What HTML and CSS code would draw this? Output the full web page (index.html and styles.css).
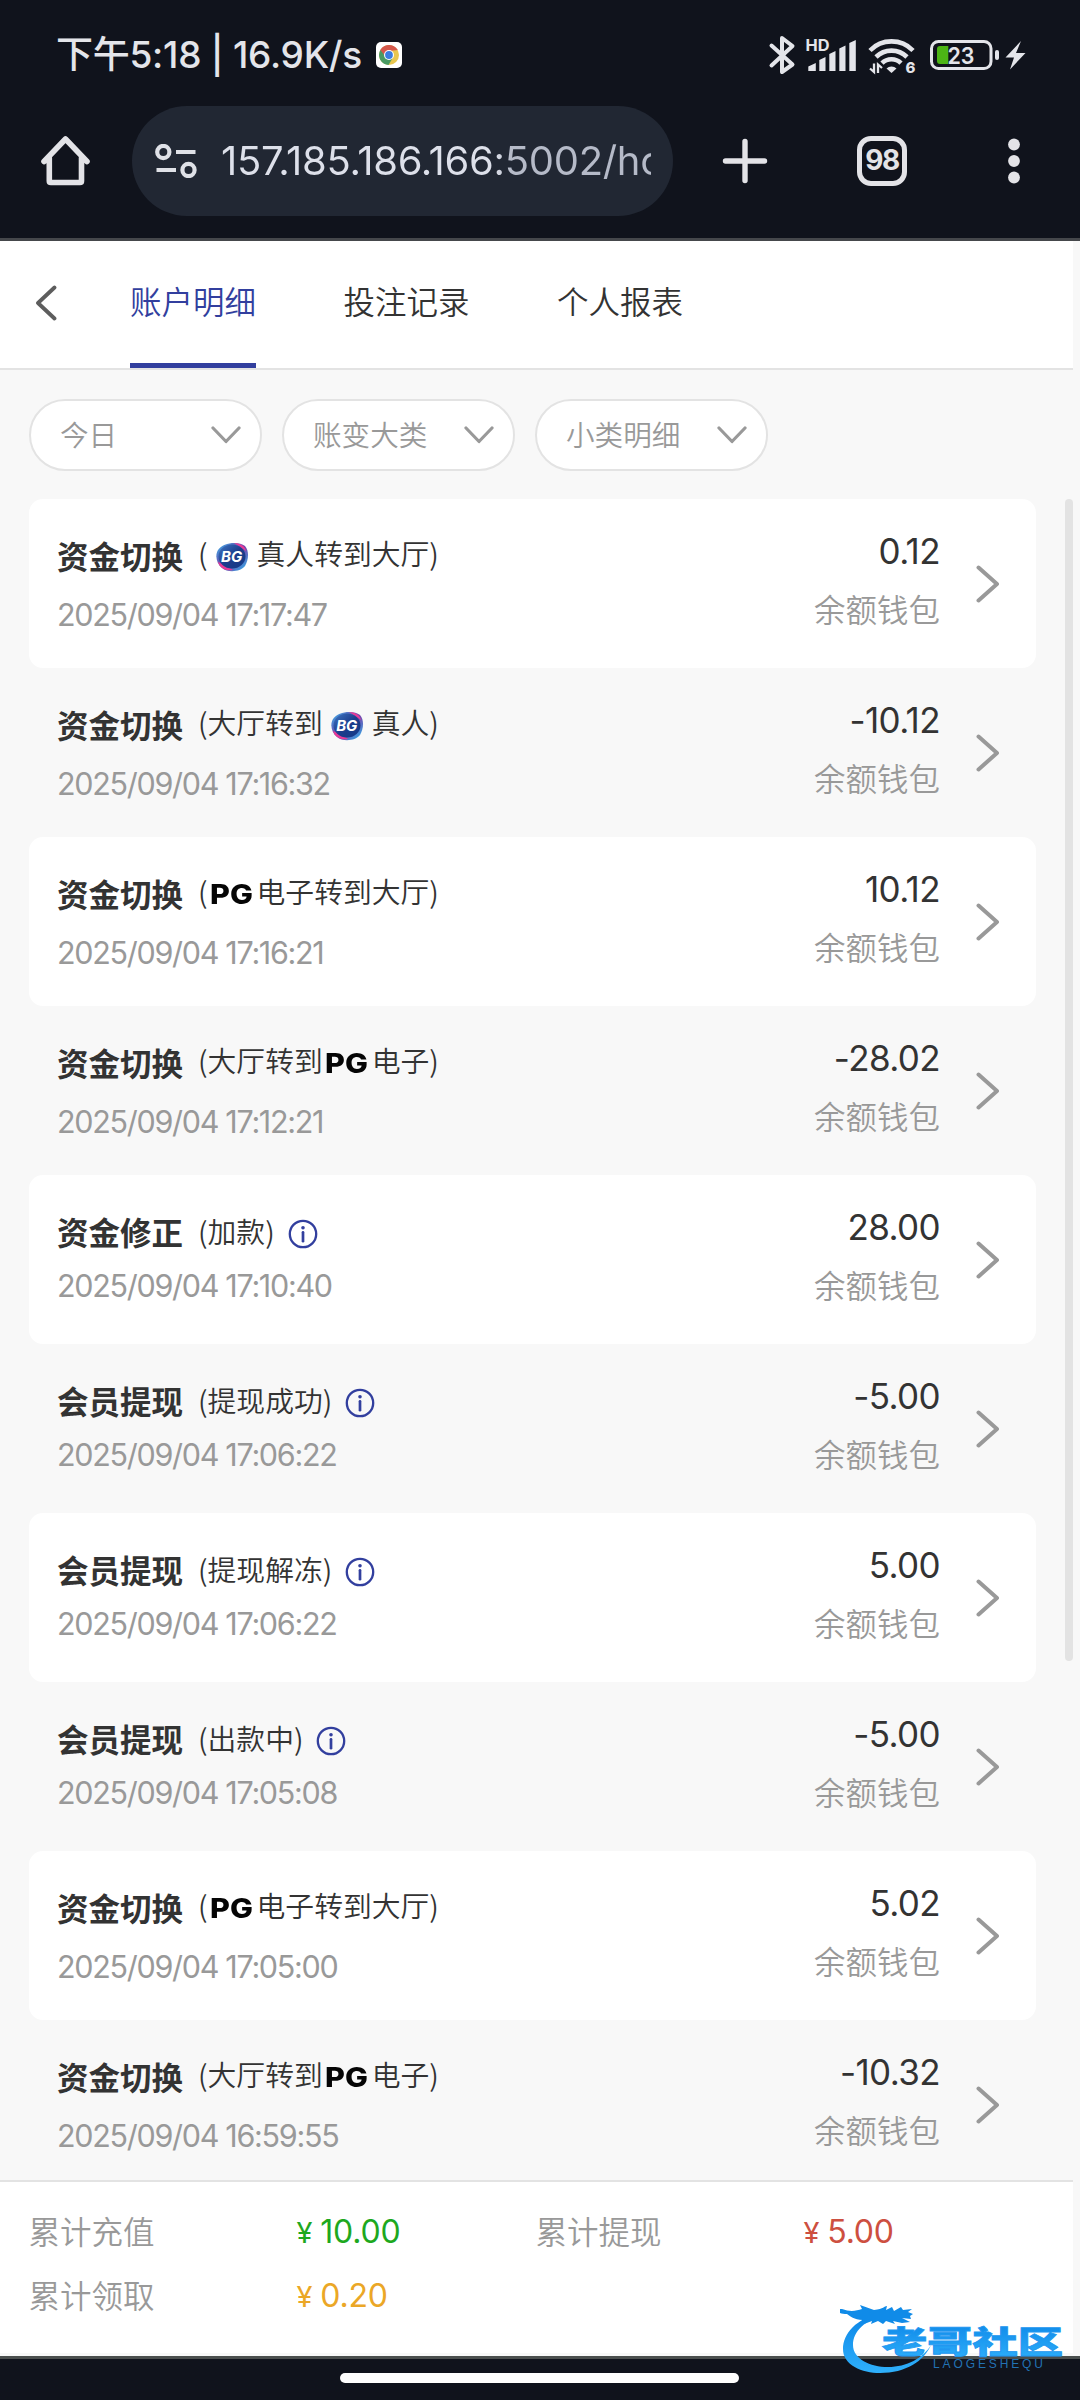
FILE: index.html
```html
<!DOCTYPE html>
<html lang="zh-CN">
<head>
<meta charset="utf-8">
<title>账户明细</title>
<link rel="stylesheet" href="styles.css">
</head>
<body>
<svg class="sprite" aria-hidden="true">
  <defs>
    <linearGradient id="bgRing" x1="0" y1="0" x2="1" y2="1">
      <stop offset="0" stop-color="#2fb4ea"/><stop offset=".5" stop-color="#7a3fa8"/><stop offset="1" stop-color="#28b8ee"/>
    </linearGradient>
    <linearGradient id="bgCore" x1="0" y1="0" x2="1" y2="1">
      <stop offset="0" stop-color="#3f78c4"/><stop offset=".5" stop-color="#1c3c8c"/><stop offset="1" stop-color="#143a86"/>
    </linearGradient>
    <linearGradient id="dragon" x1="0" y1="0" x2="0" y2="1">
      <stop offset="0" stop-color="#0a84e6"/><stop offset="1" stop-color="#2fb0fb"/>
    </linearGradient>
  </defs>
  <symbol id="arrow" viewBox="0 0 24 38"><path d="M2.5 2.500 21 19 2.500 35.500" fill="none" stroke="#999" stroke-width="4" stroke-linecap="round" stroke-linejoin="round"/></symbol>
  <symbol id="down" viewBox="0 0 30 18"><path d="M2 2 15 15.500 28 2" fill="none" stroke="#999" stroke-width="3.200" stroke-linecap="round" stroke-linejoin="round"/></symbol>
  <symbol id="info" viewBox="0 0 30 30"><circle cx="15" cy="15" r="13.200" fill="none" stroke="#323f9e" stroke-width="2.300"/><circle cx="15" cy="8.700" r="1.800" fill="#323f9e"/><path d="M15 13.300v8.900" stroke="#323f9e" stroke-width="2.700" stroke-linecap="round"/></symbol>
  <symbol id="ball" viewBox="0 0 34 30">
    <path d="M3 8C8 0 24-1 30 4c5 6 3 15 0 20-5 6-17 7-23 2C1 21 0 13 3 8z" fill="url(#bgRing)"/>
    <path d="M19 1c6 0 11 3 12 8L24 4zM3 20c2 7 9 9 15 8l-8-5z" fill="#e83a96"/>
    <ellipse cx="17" cy="14.500" rx="13.500" ry="12" fill="url(#bgCore)"/>
  </symbol>
</svg>

<div class="phone">
  <header class="chrome">
    <div class="status">
      <span class="clock">下午5:18 | 16.9K/s</span>
      <svg class="app" viewBox="0 0 26 26"><rect width="26" height="26" rx="5" fill="#fff"/><circle cx="13" cy="13" r="10" fill="#e8c64e"/><path d="M4.340 8A10 10 0 0 1 21.660 8H13z" fill="#d5584c"/><path d="M4.340 8A10 10 0 0 0 12.500 23L17 15.500 13 13z" fill="#4a9a63"/><path d="M4.340 8 13 3l9 5-9 1-4 5z" fill="#d5584c"/><circle cx="13" cy="13" r="5" fill="#fff"/><circle cx="13" cy="13" r="3.900" fill="#3b7de0"/></svg>
      <svg class="sys" viewBox="766 30 264 50" fill="#e4e5ea">
        <path d="M771.500 45.500 792.500 64.500 782 72V38l10.500 8-21 19.500" fill="none" stroke="#e4e5ea" stroke-width="4" stroke-linejoin="round" stroke-linecap="round"/>
        <text x="805.500" y="51" font-family="Inter, sans-serif" font-size="16" font-weight="700" textLength="24" lengthAdjust="spacingAndGlyphs">HD</text>
        <path d="M808.300 66.500 815.800 63V71h-7.500zM819.300 60l6.200-3V71h-6.200zM829.300 54l6.200-3V71h-6.200zM839.300 48.500l6.200-3V71h-6.200zM849.300 43l6.500-3V71h-6.500z"/>
        <g fill="none" stroke="#e4e5ea" stroke-width="4.600"><path d="M870 50.500a30 30 0 0 1 43 0"/><path d="M876 57a22 22 0 0 1 31 0"/><path d="M882 63.200a13.500 13.500 0 0 1 19 0"/></g>
        <path d="M886.500 68.500a7 7 0 0 1 10 0l-5 4.500z"/>
        <path d="M874 63.500V72L870 68.500M878 73v-8.500L882 68" fill="none" stroke="#e4e5ea" stroke-width="2.300"/>
        <text x="905.500" y="73" font-family="Inter, sans-serif" font-size="15" font-weight="800">6</text>
        <rect x="931.500" y="41.500" width="59.500" height="27" rx="7" fill="none" stroke="#e4e5ea" stroke-width="3"/>
        <rect x="995" y="50" width="4" height="10" rx="2"/>
        <path d="M940 46h8.300v18H940q-3 0-3-3V49q0-3 3-3z" fill="#4cb515"/>
        <text x="947.500" y="64" font-family="Inter, sans-serif" font-size="23.500" font-weight="600" textLength="27" lengthAdjust="spacingAndGlyphs">23</text>
        <path d="M1021 41 1005.500 57.500h8.500L1010 69.500 1025.500 53H1016z"/>
      </svg>
    </div>
    <div class="bar">
      <svg class="home" viewBox="0 0 52 52"><path d="M4 26.500 25.500 4 47 26.500M9.300 23V46q0 1.500 1.500 1.500H40q1.500 0 1.500-1.500V23" fill="none" stroke="#e3e3e7" stroke-width="5.600" stroke-linejoin="round" stroke-linecap="round"/></svg>
      <div class="omnibox">
        <svg class="tune" viewBox="0 0 42 34" fill="none" stroke="#dfe1e7" stroke-width="4.200"><circle cx="8.300" cy="8" r="6.100"/><path d="M21 8h19.500M1.500 26h19.500"/><circle cx="33.500" cy="26" r="6.100"/></svg>
        <span class="url">157.185.186.166:5002/ho</span>
      </div>
      <svg class="plus" viewBox="0 0 46 46"><path d="M23 3.500v39M3.500 23h39" stroke="#e3e3e7" stroke-width="5.400" stroke-linecap="round"/></svg>
      <span class="tabcount">98</span>
      <svg class="dots" viewBox="0 0 12 46" fill="#e3e3e7"><circle cx="6" cy="6.500" r="5.900"/><circle cx="6" cy="23" r="5.900"/><circle cx="6" cy="39.500" r="5.900"/></svg>
    </div>
  </header>

  <main class="page">
    <nav class="tabs">
      <svg class="back" viewBox="0 0 22 36"><path d="M19.500 2.500 3 18 19.500 33.500" fill="none" stroke="#5d5d5d" stroke-width="3.800" stroke-linecap="round" stroke-linejoin="round"/></svg>
      <a class="tab active">账户明细</a>
      <a class="tab">投注记录</a>
      <a class="tab">个人报表</a>
    </nav>
    <div class="filters">
      <div class="select"><span>今日</span><svg><use href="#down"/></svg></div>
      <div class="select"><span>账变大类</span><svg><use href="#down"/></svg></div>
      <div class="select"><span>小类明细</span><svg><use href="#down"/></svg></div>
    </div>
    <div class="scroller">
      <ul class="list">
        <li class="row"><div class="what"><div class="line"><b>资金切换</b><span class="sub">(<span class="bg"><svg><use href="#ball"/></svg><em>BG</em></span>真人转到大厅)</span></div><time>2025/09/04 17:17:47</time></div><div class="sum"><span class="amount">0.12</span><span class="wallet">余额钱包</span></div><svg class="go"><use href="#arrow"/></svg></li>
        <li class="row"><div class="what"><div class="line"><b>资金切换</b><span class="sub">(大厅转到<span class="bg"><svg><use href="#ball"/></svg><em>BG</em></span>真人)</span></div><time>2025/09/04 17:16:32</time></div><div class="sum"><span class="amount">-10.12</span><span class="wallet">余额钱包</span></div><svg class="go"><use href="#arrow"/></svg></li>
        <li class="row"><div class="what"><div class="line"><b>资金切换</b><span class="sub">(<span class="pg">PG</span>电子转到大厅)</span></div><time>2025/09/04 17:16:21</time></div><div class="sum"><span class="amount">10.12</span><span class="wallet">余额钱包</span></div><svg class="go"><use href="#arrow"/></svg></li>
        <li class="row"><div class="what"><div class="line"><b>资金切换</b><span class="sub">(大厅转到<span class="pg">PG</span>电子)</span></div><time>2025/09/04 17:12:21</time></div><div class="sum"><span class="amount">-28.02</span><span class="wallet">余额钱包</span></div><svg class="go"><use href="#arrow"/></svg></li>
        <li class="row noted"><div class="what"><div class="line"><b>资金修正</b><span class="sub">(加款)</span><svg class="info"><use href="#info"/></svg></div><time>2025/09/04 17:10:40</time></div><div class="sum"><span class="amount">28.00</span><span class="wallet">余额钱包</span></div><svg class="go"><use href="#arrow"/></svg></li>
        <li class="row noted"><div class="what"><div class="line"><b>会员提现</b><span class="sub">(提现成功)</span><svg class="info"><use href="#info"/></svg></div><time>2025/09/04 17:06:22</time></div><div class="sum"><span class="amount">-5.00</span><span class="wallet">余额钱包</span></div><svg class="go"><use href="#arrow"/></svg></li>
        <li class="row noted"><div class="what"><div class="line"><b>会员提现</b><span class="sub">(提现解冻)</span><svg class="info"><use href="#info"/></svg></div><time>2025/09/04 17:06:22</time></div><div class="sum"><span class="amount">5.00</span><span class="wallet">余额钱包</span></div><svg class="go"><use href="#arrow"/></svg></li>
        <li class="row noted"><div class="what"><div class="line"><b>会员提现</b><span class="sub">(出款中)</span><svg class="info"><use href="#info"/></svg></div><time>2025/09/04 17:05:08</time></div><div class="sum"><span class="amount">-5.00</span><span class="wallet">余额钱包</span></div><svg class="go"><use href="#arrow"/></svg></li>
        <li class="row"><div class="what"><div class="line"><b>资金切换</b><span class="sub">(<span class="pg">PG</span>电子转到大厅)</span></div><time>2025/09/04 17:05:00</time></div><div class="sum"><span class="amount">5.02</span><span class="wallet">余额钱包</span></div><svg class="go"><use href="#arrow"/></svg></li>
        <li class="row"><div class="what"><div class="line"><b>资金切换</b><span class="sub">(大厅转到<span class="pg">PG</span>电子)</span></div><time>2025/09/04 16:59:55</time></div><div class="sum"><span class="amount">-10.32</span><span class="wallet">余额钱包</span></div><svg class="go"><use href="#arrow"/></svg></li>
      </ul>
      <div class="thumb"></div>
    </div>
    <footer class="totals">
      <span>累计充值</span><span class="money in"><i>¥</i>10.00</span>
      <span>累计提现</span><span class="money out"><i>¥</i>5.00</span>
      <span>累计领取</span><span class="money got"><i>¥</i>0.20</span>
    </footer>
  </main>
  <div class="gesture"><div class="pill"></div></div>

  <svg class="watermark" viewBox="840 2300 230 76">
    <path d="M882 2313c-26 5-39 21-39 36 0 16 19 24 37 24 26 0 44-12 51-28-8 13-24 22-43 22-18 0-35-8-35-22 0-14 12-24 32-32z" fill="url(#dragon)"/>
    <path d="M842 2309c8 3 14 2 20 0l-2-4 14 5c10-1 10-4 13-4l-1 4 6-3 2 4 7-4 2 3 9-1-4 3 5 2-3 2 1 3-9-1 8 4-8 1-9-2 2 3-9-3-3 3-5-3-7 3 1-3-8 3 3-4c-12 0-14-2-20-6-6 0-9-1-12-5z" fill="#108be8"/>
    <text x="882" y="2353" font-family="'Noto Sans CJK SC', sans-serif" font-size="31" font-weight="900" textLength="181" lengthAdjust="spacingAndGlyphs" fill="url(#dragon)" stroke="#2197f0" stroke-width=".8">老哥社区</text>
    <text x="933" y="2368" font-family="'Liberation Sans', sans-serif" font-size="12" textLength="110" lengthAdjust="spacing" fill="#2272b4">LAOGESHEQU</text>
  </svg>
</div>
</body>
</html>
```
FILE: styles.css
```css
* { box-sizing: border-box; }
body {
  margin: 0;
  background: #10131c;
  font-family: "Noto Sans CJK SC", sans-serif;
  color: #333;
}
svg { display: block; flex: none; }
.sprite { position: absolute; width: 0; height: 0; }
.phone {
  position: relative;
  width: 1080px;
  height: 2400px;
  overflow: hidden;
  display: flex;
  flex-direction: column;
}

/* browser chrome */
.chrome {
  height: 241px;
  border-bottom: 3px solid #45474b;
  background: #10131c;
}
.status {
  display: flex;
  align-items: center;
  height: 106px;
  padding: 4px 50px 0 56px;
}
.clock {
  width: 320px;
  font: 500 37px/50px Inter, "Noto Sans CJK SC", sans-serif;
  letter-spacing: -0.25px;
  white-space: nowrap;
  color: #e4e5ea;
}
.app { width: 26px; height: 26px; }
.sys { width: 264px; height: 50px; margin-left: auto; }
.bar {
  display: flex;
  align-items: center;
  height: 110px;
  padding-left: 40px;
}
.home { width: 52px; height: 52px; }
.omnibox {
  display: flex;
  align-items: center;
  width: 541px;
  height: 110px;
  margin-left: 40px;
  padding: 0 22px 0 23px;
  border-radius: 55px;
  background: #212733;
}
.tune { width: 42px; height: 34px; }
.url {
  flex: 1;
  margin-left: 24px;
  overflow: hidden;
  white-space: nowrap;
  font: 400 40px/60px Inter, sans-serif;
  letter-spacing: -0.3px;
  color: transparent;
  background: linear-gradient(90deg, #dde0ea 0 274px, #b5bac8 290px);
  background-clip: text;
}
.plus { width: 46px; height: 46px; margin-left: 49px; }
.tabcount {
  width: 50px;
  height: 50px;
  margin-left: 89px;
  border: 5.500px solid #e3e3e7;
  border-radius: 14px;
  font: 700 28px/39px Inter, sans-serif;
  letter-spacing: -1.500px;
  text-align: center;
  color: #e3e3e7;
}
.dots { width: 12px; height: 46px; margin-left: 101px; }

/* page */
.page {
  display: flex;
  flex-direction: column;
  height: 2115px;
  background: #f8f8f8;
}
.tabs {
  display: flex;
  width: 1073px;
  height: 129px;
  padding-left: 35px;
  border-bottom: 2px solid #e3e3e3;
  background: #fff;
}
.back { width: 22px; height: 36px; margin: 44px 73px 0 0; }
.tab {
  width: 126px;
  height: 127px;
  margin-right: 87.500px;
  font-size: 31.500px;
  line-height: 118px;
  font-weight: 350;
  white-space: nowrap;
  color: #333;
}
.active {
  color: #323f9e;
  background: linear-gradient(#323f9e, #323f9e) bottom / 100% 5px no-repeat;
}
.filters {
  display: flex;
  gap: 20px;
  height: 129px;
  padding: 29px 0 0 29px;
}
.select {
  display: flex;
  align-items: center;
  justify-content: space-between;
  width: 233px;
  height: 72px;
  padding: 0 19px 0 29px;
  border: 2px solid #e3e3e3;
  border-radius: 36px;
  background: #fff;
  font-size: 28.600px;
  line-height: 66px;
  font-weight: 350;
  color: #999;
}
.select span { margin-top: -2px; }
.select svg { width: 30px; height: 18px; }
.scroller {
  display: flex;
  height: 1681px;
  overflow: hidden;
}
.list {
  width: 1007px;
  margin: 0 0 0 29px;
  padding: 0;
  list-style: none;
}
.row {
  display: flex;
  align-items: flex-start;
  height: 169.050px;
  padding: 34px 36px 0 28px;
  border-radius: 14px;
}
.row:nth-child(odd) { background: #fff; }
.what { flex: 1; }
.line { display: flex; align-items: center; height: 44px; }
.line b { font-size: 31.500px; font-weight: 700; line-height: 44px; }
.sub {
  display: flex;
  align-items: center;
  height: 44px;
  margin: -6px 0 0 15px;
  font-size: 28.800px;
  font-weight: 350;
}
.noted .sub { margin-top: -2px; }
.bg { display: grid; width: 34px; height: 30px; margin: 10px 8px 0 7px; }
.bg svg, .bg em { grid-area: 1 / 1; width: 34px; height: 30px; }
.bg em {
  font: italic 700 15px/29px Inter, sans-serif;
  text-align: center;
  color: #fff;
}
.pg {
  width: 49px;
  height: 24px;
  margin-top: 9px;
  padding-left: 2px;
  font: 800 27px/24px Inter, sans-serif;
  letter-spacing: 0;
  color: #050505;
  transform: scaleX(1.130);
  transform-origin: 2px 50%;
}
.info { width: 30px; height: 30px; margin: 6px 0 0 13px; }
time {
  display: block;
  margin-top: 20px;
  font: 400 30.500px/36px Inter, sans-serif;
  letter-spacing: -1.300px;
  color: #999;
}
.noted time { margin-top: 15px; }
.sum {
  display: flex;
  flex-direction: column;
  align-items: flex-end;
  margin-right: 36px;
}
.amount {
  margin: -2px 0 0 0;
  font: 400 35px/40px Inter, sans-serif;
  letter-spacing: -0.600px;
}
.wallet {
  margin-top: 15px;
  font-size: 31.500px;
  line-height: 44px;
  font-weight: 350;
  color: #999;
}
.go { width: 24px; height: 38px; margin-top: 32px; }
.thumb {
  width: 8px;
  height: 1162px;
  margin-left: 29px;
  border-radius: 4px;
  background: #e3e3e3;
}
.totals {
  display: grid;
  grid-template-columns: 268px 239px 268px 1fr;
  grid-auto-rows: 64px;
  width: 1073px;
  height: 173px;
  padding: 17px 0 0 28.500px;
  border-top: 2px solid #e3e3e3;
  background: #fff;
  font-size: 31.500px;
  line-height: 62px;
  font-weight: 350;
  color: #999;
}
.money {
  font: 400 32px/66px Inter, sans-serif;
  letter-spacing: -0.200px;
}
.money i { font-style: normal; font-size: 29px; margin-right: 8px; }
.in { color: #1ea81e; }
.out { color: #cd4f40; }
.got { color: #eba726; }

.gesture {
  height: 44px;
  padding-top: 14px;
  border-top: 3px solid #4a4f4e;
}
.pill { width: 399px; height: 10px; margin: 0 0 0 340px; border-radius: 5px; background: #fff; }
.watermark { position: absolute; left: 840px; top: 2300px; width: 230px; height: 76px; }
```
